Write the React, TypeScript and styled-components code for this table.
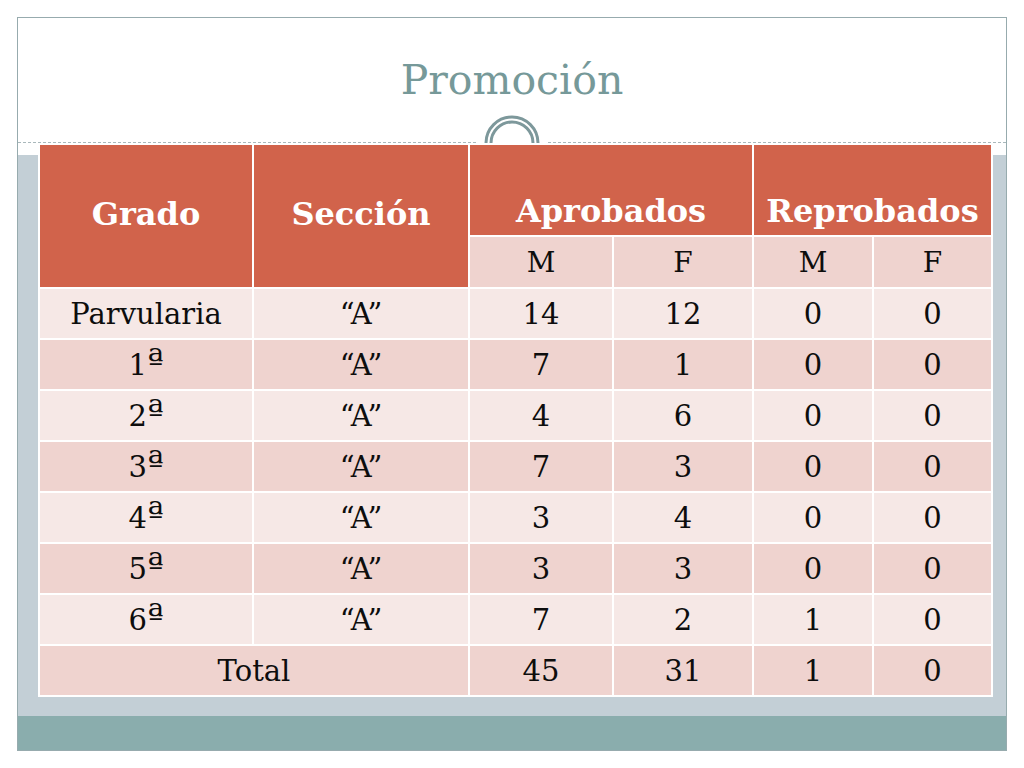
import styled, { createGlobalStyle } from "styled-components";

const GlobalStyle = createGlobalStyle`
    html, body {
        margin: 0;
        padding: 0;
        background: #ffffff;
    }
    body {
        font-family: "DejaVu Serif", "Liberation Serif", serif;
    }
`;

const Slide = styled.div`
    width: 1024px;
    height: 768px;
    padding: 17px;
    box-sizing: border-box;
    background: #ffffff;
`;

const Frame = styled.div`
    width: 990px;
    height: 734px;
    box-sizing: border-box;
    border: 1px solid #97abae;
    display: flex;
    flex-direction: column;
`;

const TitleArea = styled.div`
    position: relative;
    height: 124px;
    flex: none;
    border-bottom: 1px dashed #a9b8bb;
    display: flex;
    align-items: center;
    justify-content: center;
`;

const Title = styled.h1`
    margin: 0;
    font-family: "DejaVu Serif", "Liberation Serif", serif;
    font-weight: normal;
    font-size: 41px;
    color: #769999;
`;

const Ornament = styled.svg`
    position: absolute;
    left: 459px;
    bottom: -2px;
`;

const Body = styled.div`
    flex: 1;
    background: linear-gradient(to bottom, #ffffff 12px, #c3cfd6 12px);
    padding-left: 20px;
`;

const Footer = styled.div`
    height: 34px;
    flex: none;
    background: #8aadad;
`;

const Table = styled.table`
    table-layout: fixed;
    width: 955px;
    border-collapse: separate;
    border-spacing: 2px;
    background: #ffffff;
`;

const HeadCell = styled.th<{ $align?: string }>`
    background: #d1634b;
    color: #ffffff;
    font-family: "DejaVu Serif", "Liberation Serif", serif;
    font-weight: bold;
    font-size: 32px;
    padding: 0 0 5px;
    vertical-align: ${({ $align }) => $align || "middle"};
    text-align: center;
    height: 85px;
`;

const SubCell = styled.td`
    background: #efd3cf;
    color: #0d0d0d;
    font-size: 28px;
    text-align: center;
    height: 50px;
    padding: 0;
`;

const Cell = styled.td<{ $dark?: boolean }>`
    background: ${({ $dark }) => ($dark ? "#efd3cf" : "#f6e8e6")};
    color: #0d0d0d;
    font-size: 29px;
    text-align: center;
    height: 49px;
    padding: 0;
`;

const Ord = styled.span`
    font-size: 1.2em;
    line-height: 0;
    position: relative;
    top: -1px;
`;

const rows = [
    ["Parvularia", "“A”", "14", "12", "0", "0"],
    ["1ª", "“A”", "7", "1", "0", "0"],
    ["2ª", "“A”", "4", "6", "0", "0"],
    ["3ª", "“A”", "7", "3", "0", "0"],
    ["4ª", "“A”", "3", "4", "0", "0"],
    ["5ª", "“A”", "3", "3", "0", "0"],
    ["6ª", "“A”", "7", "2", "1", "0"],
];

const renderValue = (v: string) =>
    v.endsWith("ª") ? (
        <>
            {v.slice(0, -1)}
            <Ord>ª</Ord>
        </>
    ) : (
        v
    );

const App = () => {
    return (
        <>
            <GlobalStyle />
            <Slide>
                <Frame>
                    <TitleArea>
                        <Title>Promoción</Title>
                        <Ornament width="70" height="32" viewBox="0 0 70 32">
                            <rect x="0" y="28" width="70" height="4" fill="#ffffff" />
                            <path d="M9 31 A26 26 0 0 1 61 31" fill="#ffffff" stroke="#7d989b" strokeWidth="3" />
                            <path d="M14 31 A21 21 0 0 1 56 31" fill="none" stroke="#7d989b" strokeWidth="3" />
                        </Ornament>
                    </TitleArea>
                    <Body>
                        <Table>
                            <colgroup>
                                <col style={{ width: 212 }} />
                                <col style={{ width: 214 }} />
                                <col style={{ width: 142 }} />
                                <col style={{ width: 138 }} />
                                <col style={{ width: 118 }} />
                                <col style={{ width: 117 }} />
                            </colgroup>
                            <thead>
                                <tr>
                                    <HeadCell rowSpan={2}>Grado</HeadCell>
                                    <HeadCell rowSpan={2}>Sección</HeadCell>
                                    <HeadCell colSpan={2} $align="bottom">Aprobados</HeadCell>
                                    <HeadCell colSpan={2} $align="bottom">Reprobados</HeadCell>
                                </tr>
                                <tr>
                                    <SubCell>M</SubCell>
                                    <SubCell>F</SubCell>
                                    <SubCell>M</SubCell>
                                    <SubCell>F</SubCell>
                                </tr>
                            </thead>
                            <tbody>
                                {rows.map((r, i) => (
                                    <tr key={i}>
                                        {r.map((v, j) => (
                                            <Cell key={j} $dark={i % 2 === 1}>{renderValue(v)}</Cell>
                                        ))}
                                    </tr>
                                ))}
                                <tr>
                                    <Cell $dark colSpan={2}>Total</Cell>
                                    <Cell $dark>45</Cell>
                                    <Cell $dark>31</Cell>
                                    <Cell $dark>1</Cell>
                                    <Cell $dark>0</Cell>
                                </tr>
                            </tbody>
                        </Table>
                    </Body>
                    <Footer />
                </Frame>
            </Slide>
        </>
    );
};

export default App;
